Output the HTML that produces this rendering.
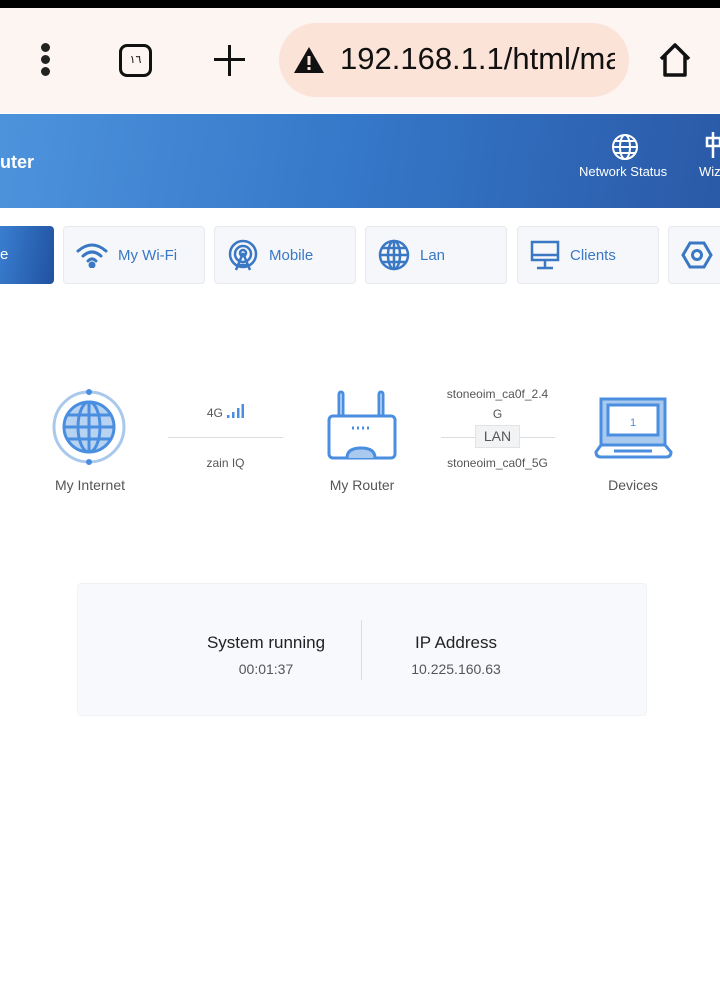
<!DOCTYPE html><html><head><style>
*{margin:0;padding:0;box-sizing:border-box}
body{width:720px;height:986px;overflow:hidden;background:#fff;font-family:"Liberation Sans",sans-serif;position:relative}
.a{position:absolute}
.tab{position:absolute;top:226px;height:58px;width:142px;background:#f5f7fa;border:1px solid #e6e9ee;border-radius:4px;color:#3a78c4;font-size:15px;display:flex;align-items:center;padding-left:12px;gap:10px}
.t{position:absolute;text-align:center;color:#555}
</style></head><body>
<div class="a" style="left:0;top:0;width:720px;height:8px;background:#000"></div>
<div class="a" style="left:0;top:8px;width:720px;height:105px;background:#fdf5f2"></div>
<div class="a" style="left:40px;top:43px;width:10px;height:34px">
<div class="a" style="left:1px;top:0;width:9px;height:9px;border-radius:50%;background:#222"></div>
<div class="a" style="left:1px;top:12px;width:9px;height:9px;border-radius:50%;background:#222"></div>
<div class="a" style="left:1px;top:24px;width:9px;height:9px;border-radius:50%;background:#222"></div></div>
<div class="a" style="left:119px;top:44px;width:33px;height:33px;border:3px solid #111;border-radius:8px;font-size:11px;text-align:center;line-height:27px;color:#111">١٦</div>
<div class="a" style="left:214px;top:58px;width:31px;height:3px;background:#111"></div>
<div class="a" style="left:228px;top:45px;width:3px;height:31px;background:#111"></div>
<div class="a" style="left:279px;top:23px;width:350px;height:74px;border-radius:37px;background:#fbe3d8;overflow:hidden">
<svg class="a" style="left:14px;top:23px" width="32" height="28" viewBox="0 0 32 28"><path d="M16 1L31 27H1Z" fill="#111"/><rect x="14.5" y="10" width="3" height="9" fill="#fbe3d8"/><rect x="14.5" y="21" width="3" height="3" fill="#fbe3d8"/></svg>
<div class="a" style="left:61px;top:18px;font-size:31px;color:#111;white-space:nowrap;width:275px;overflow:hidden">192.168.1.1/html/main</div></div>
<svg class="a" style="left:657px;top:42px" width="36" height="36" viewBox="0 0 36 36"><path d="M4 17L18 3 32 17M8 14V33H28V14" fill="none" stroke="#111" stroke-width="3.5" stroke-linejoin="round"/></svg>
<div class="a" style="left:0;top:114px;width:720px;height:94px;background:linear-gradient(100deg,#4d93dc 0%,#3577c8 50%,#2a5aa8 100%)"></div>
<div class="a" style="left:0;top:152px;color:#fff;font-weight:bold;font-size:18px">uter</div>
<svg class="a" style="left:611px;top:133px" width="28" height="28" viewBox="0 0 28 28" fill="none" stroke="#fff" stroke-width="2"><circle cx="14" cy="14" r="12"/><ellipse cx="14" cy="14" rx="5" ry="12"/><path d="M2 14H26M4 8H24M4 20H24"/></svg>
<div class="a" style="left:579px;top:164px;color:#fff;font-size:13px">Network Status</div>
<div class="a" style="left:699px;top:164px;color:#fff;font-size:13px">Wiz</div>
<svg class="a" style="left:704px;top:132px" width="16" height="26" viewBox="0 0 16 26" fill="none" stroke="#fff" stroke-width="2.5"><path d="M9 0V26M3 6H16V14H3Z"/></svg>
<div class="a" style="left:0;top:226px;width:54px;height:58px;border-radius:0 4px 4px 0;background:linear-gradient(100deg,#3a7ed0,#2052a0);color:#fff;font-size:15px;line-height:58px">e</div>
<div class="tab" style="left:63px"><svg width="32" height="26" viewBox="0 0 32 26" fill="none" stroke="#3a78c4" stroke-width="3" stroke-linecap="round"><path d="M2 9Q16-3 30 9M7 14Q16 6 25 14M12 19Q16 15 20 19"/><circle cx="16" cy="23" r="2" fill="#3a78c4"/></svg>My Wi-Fi</div>
<div class="tab" style="left:214px"><svg width="32" height="32" viewBox="0 0 32 32" fill="none" stroke="#3a78c4" stroke-width="2.5"><circle cx="16" cy="15" r="13"/><circle cx="16" cy="15" r="8"/><circle cx="16" cy="14" r="3"/><path d="M16 14L9 31M16 14L23 31M11 26H21"/></svg>Mobile</div>
<div class="tab" style="left:365px"><svg width="32" height="32" viewBox="0 0 32 32" fill="none" stroke="#3a78c4" stroke-width="2.5"><circle cx="16" cy="16" r="14"/><ellipse cx="16" cy="16" rx="6" ry="14"/><path d="M2 16H30M16 2V30M4 9H28M4 23H28"/></svg>Lan</div>
<div class="tab" style="left:517px"><svg width="30" height="30" viewBox="0 0 30 30" fill="none" stroke="#3a78c4" stroke-width="2.5"><rect x="2" y="2" width="26" height="18"/><path d="M2 15H28M15 20V27M7 28H23"/></svg>Clients</div>
<div class="tab" style="left:668px"><svg width="32" height="32" viewBox="0 0 32 32" fill="none" stroke="#3a78c4" stroke-width="3"><path d="M9 4H23L30 16 23 28H9L2 16Z"/><circle cx="16" cy="16" r="4.5"/></svg></div>
<svg class="a" style="left:51px;top:388px" width="76" height="78" viewBox="0 0 76 78" fill="none"><path d="M38 4A35 35 0 0 1 38 74" stroke="#a8c8ec" stroke-width="3"/><path d="M38 4A35 35 0 0 0 38 74" stroke="#a8c8ec" stroke-width="3"/><circle cx="38" cy="4" r="3" fill="#4a8ee0"/><circle cx="38" cy="74" r="3" fill="#4a8ee0"/><circle cx="38" cy="39" r="25" fill="#b8d3f2" stroke="#4a8ee0" stroke-width="3"/><ellipse cx="38" cy="39" rx="11" ry="25" stroke="#4a8ee0" stroke-width="3"/><path d="M13 39H63M38 14V64M17 27H59M17 51H59" stroke="#4a8ee0" stroke-width="3"/></svg>
<div class="t" style="left:30px;top:477px;width:120px;font-size:14px">My Internet</div>
<div class="t" style="left:168px;top:403px;width:115px;font-size:12px">4G <svg width="18" height="16" viewBox="0 0 18 16" style="vertical-align:-2px"><rect x="1" y="12" width="2.5" height="3" fill="#4a8ee0"/><rect x="6" y="9" width="2.5" height="6" fill="#4a8ee0"/><rect x="11" y="5" width="2.5" height="10" fill="#4a8ee0"/><rect x="15.5" y="1" width="2.5" height="14" fill="#4a8ee0"/></svg></div>
<div class="a" style="left:168px;top:437px;width:115px;height:1px;background:#ddd"></div>
<div class="t" style="left:168px;top:456px;width:115px;font-size:12px">zain IQ</div>
<svg class="a" style="left:326px;top:390px" width="72" height="72" viewBox="0 0 72 72" fill="none" stroke="#4a8ee0" stroke-width="3"><rect x="13" y="2" width="4" height="24" rx="2"/><rect x="53" y="2" width="4" height="24" rx="2"/><rect x="3" y="26" width="66" height="42" rx="4" fill="#fff"/><path d="M21 68Q21 58 35 58Q49 58 49 68" fill="#a9c9ef"/><path d="M26 38H46" stroke-dasharray="2 3"/></svg>
<div class="t" style="left:302px;top:477px;width:120px;font-size:14px">My Router</div>
<div class="t" style="left:436px;top:384px;width:123px;font-size:12px;line-height:20px">stoneoim_ca0f_2.4<br>G</div>
<div class="a" style="left:441px;top:437px;width:114px;height:1px;background:#ddd"></div>
<div class="a" style="left:475px;top:425px;width:45px;height:23px;background:#f1f3f5;border:1px solid #e3e3e3;color:#555;font-size:14px;text-align:center;line-height:21px">LAN</div>
<div class="t" style="left:436px;top:456px;width:123px;font-size:12px">stoneoim_ca0f_5G</div>
<svg class="a" style="left:594px;top:396px" width="80" height="64" viewBox="0 0 80 64" fill="none" stroke="#4a8ee0" stroke-width="3"><rect x="7" y="3" width="64" height="46" fill="#a9c9ef"/><rect x="14" y="9" width="50" height="30" fill="#fff"/><path d="M2 56L7 49H71L77 56Q77 61 72 61H7Q2 61 2 56Z" fill="#fff"/><path d="M20 55H58"/><text x="39" y="30" font-size="11" fill="#4a8ee0" stroke="none" text-anchor="middle" font-family="Liberation Sans">1</text></svg>
<div class="t" style="left:573px;top:477px;width:120px;font-size:14px">Devices</div>
<div class="a" style="left:77px;top:583px;width:570px;height:133px;background:#f7f9fc;border-radius:4px;border:1px solid #f0f2f5"></div>
<div class="a" style="left:361px;top:620px;width:1px;height:60px;background:#ddd"></div>
<div class="t" style="left:186px;top:633px;width:160px;font-size:17px;color:#222">System running</div>
<div class="t" style="left:186px;top:661px;width:160px;font-size:14px">00:01:37</div>
<div class="t" style="left:376px;top:633px;width:160px;font-size:17px;color:#222">IP Address</div>
<div class="t" style="left:376px;top:661px;width:160px;font-size:14px">10.225.160.63</div>
</body></html>
